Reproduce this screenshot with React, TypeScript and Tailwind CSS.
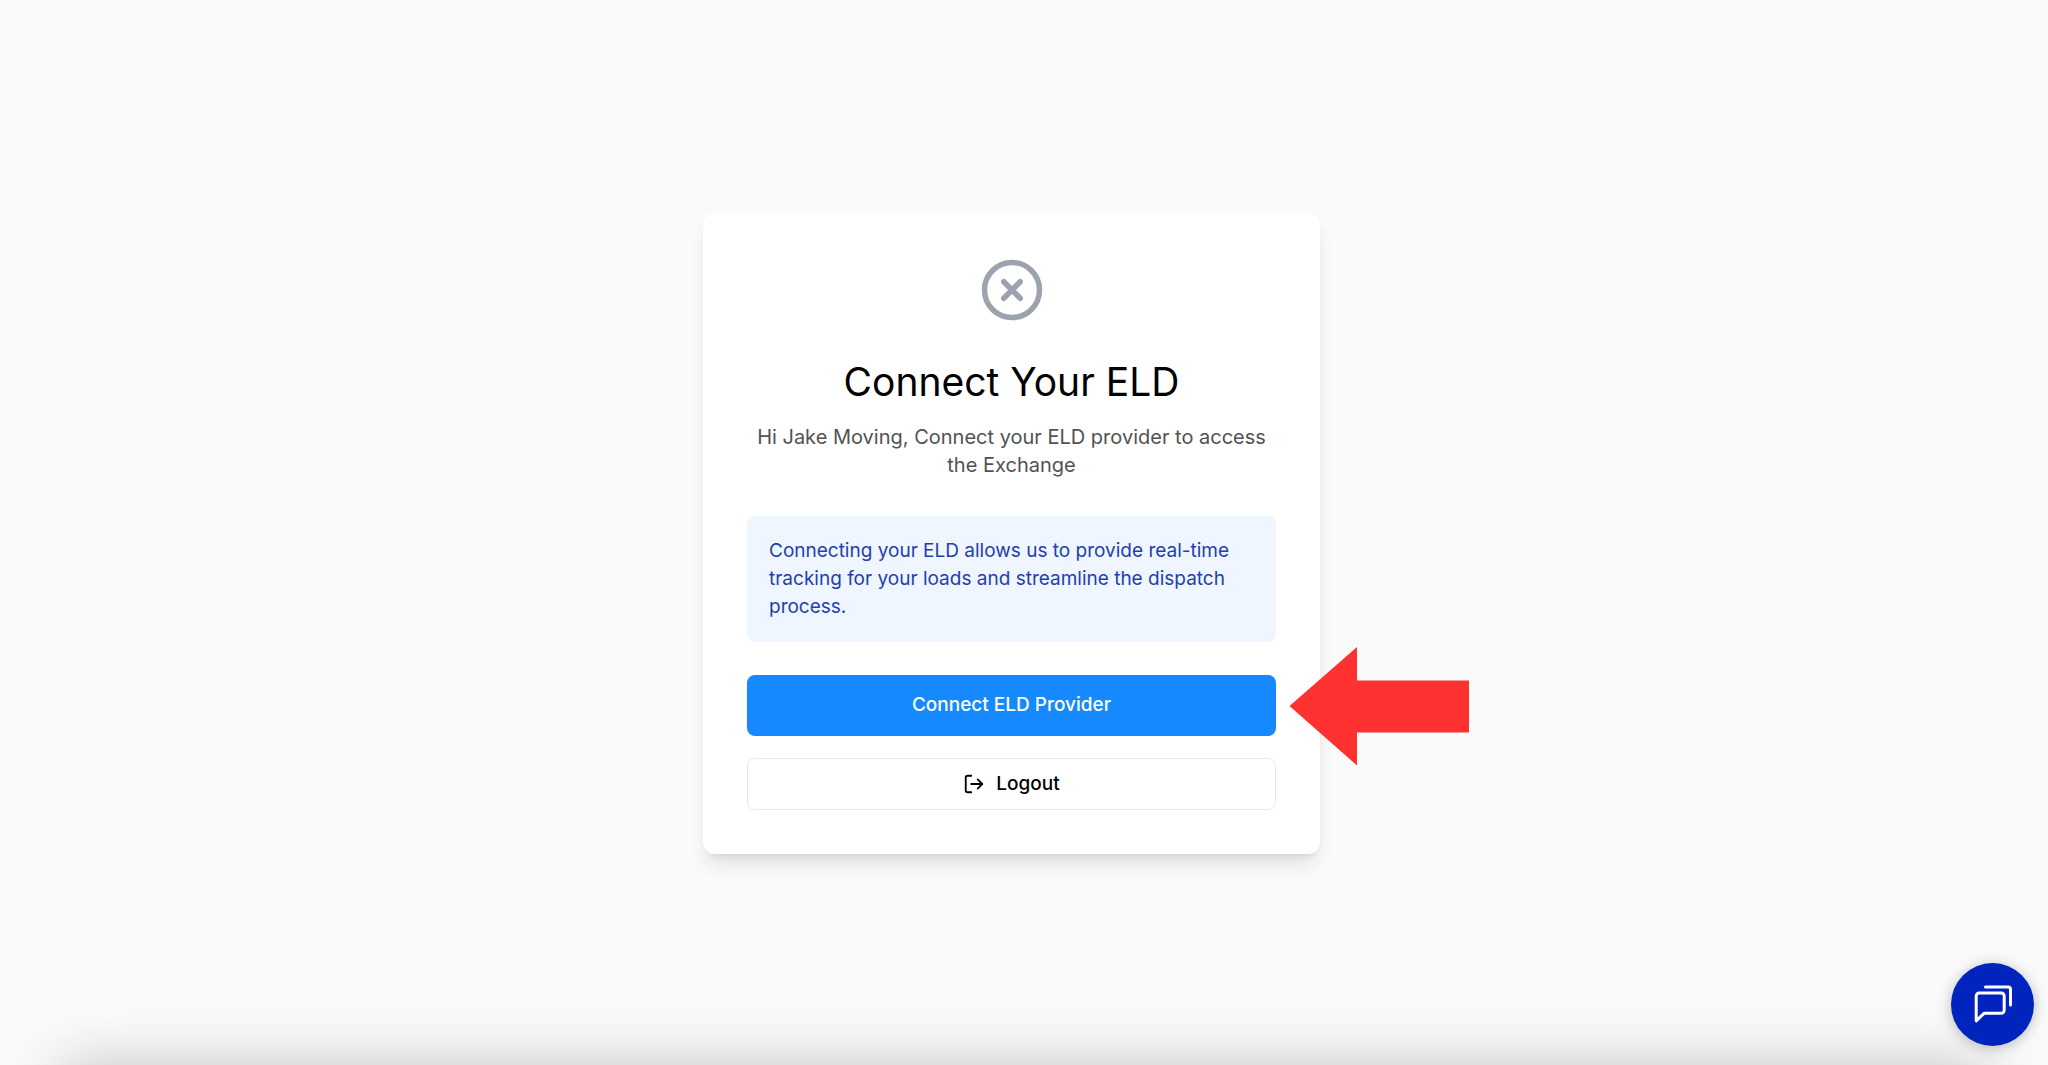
import { CircleX, LogOut } from 'lucide-react';

interface ConnectEldProps {
  userName: string;
  onConnect?: () => void;
  onLogout?: () => void;
}

function PointerArrow() {
  return (
    <svg
      className="pointer-events-none absolute left-full top-1/2 ml-[13px] h-[119px] w-[180px] -translate-y-1/2"
      viewBox="0 0 180 119"
      aria-hidden="true"
    >
      <path d="M0.5 59.5 68 0.5v33.5h112v52H68v33z" fill="#ff3131" />
    </svg>
  );
}

function ConnectEldCard({ userName, onConnect, onLogout }: ConnectEldProps) {
  return (
    <main className="w-full max-w-[617px] rounded-xl bg-white p-11 shadow-[0_14px_20px_-4px_rgba(0,0,0,0.1),0_6px_8px_-5px_rgba(0,0,0,0.1)]">
      <div className="mb-[37px] text-center">
        <CircleX className="mx-auto mb-8 size-[66px] text-[#9ca3af]" />
        <h1 className="mb-[14px] text-[39px] leading-[54px] text-black">Connect Your ELD</h1>
        <p className="text-xl leading-7 text-[#525252]">
          Hi {userName}, Connect your ELD provider to access the Exchange
        </p>
      </div>

      <div className="mb-[33px] rounded-lg bg-[#eff6ff] px-[22px] py-[21px]">
        <p className="text-[19px] leading-7 text-[#1e40af]">
          Connecting your ELD allows us to provide real-time tracking for your loads and streamline
          the dispatch process.
        </p>
      </div>

      <div className="space-y-[22px]">
        <div className="relative">
          <button
            type="button"
            onClick={onConnect}
            className="flex h-[61px] w-full cursor-pointer items-center justify-center rounded-lg bg-[#1689ff] text-[19px] font-medium text-white"
          >
            Connect ELD Provider
          </button>
          <PointerArrow />
        </div>
        <button
          type="button"
          onClick={onLogout}
          className="flex h-[52px] w-full cursor-pointer items-center justify-center gap-[11px] rounded-lg border border-[#e2e8f0] bg-white text-[19px] font-medium text-black"
        >
          <LogOut className="size-[22px]" />
          Logout
        </button>
      </div>
    </main>
  );
}

function ChatButton() {
  return (
    <button
      type="button"
      aria-label="Open chat"
      className="fixed bottom-[19px] right-[14px] flex size-[83px] cursor-pointer items-center justify-center rounded-full bg-[#0024bd] text-white shadow-[0_2px_14px_rgba(0,0,0,0.25)]"
    >
      <svg
        className="size-10"
        viewBox="0 0 40 40"
        fill="none"
        stroke="currentColor"
        strokeWidth="3"
        strokeLinecap="round"
        strokeLinejoin="round"
        aria-hidden="true"
      >
        <path d="M3.2 35.8V11a3 3 0 0 1 3-3h22a3 3 0 0 1 3 3v14.3a3 3 0 0 1-3 3H11z" />
        <path d="M12.5 2H35a2.5 2.5 0 0 1 2.5 2.5V20" />
      </svg>
    </button>
  );
}

export default function App() {
  return (
    <div className="relative flex min-h-screen items-center justify-center overflow-hidden bg-[#fafafa] pt-0.5 pr-[25px] font-['Inter',sans-serif]">
      <ConnectEldCard userName="Jake Moving" />
      {/* shadow cast by the docked panel below the fold */}
      <div className="pointer-events-none absolute inset-x-14 top-full h-24 rounded-t-3xl shadow-[0_0_60px_rgba(0,0,0,0.22)]" />
      <ChatButton />
    </div>
  );
}
